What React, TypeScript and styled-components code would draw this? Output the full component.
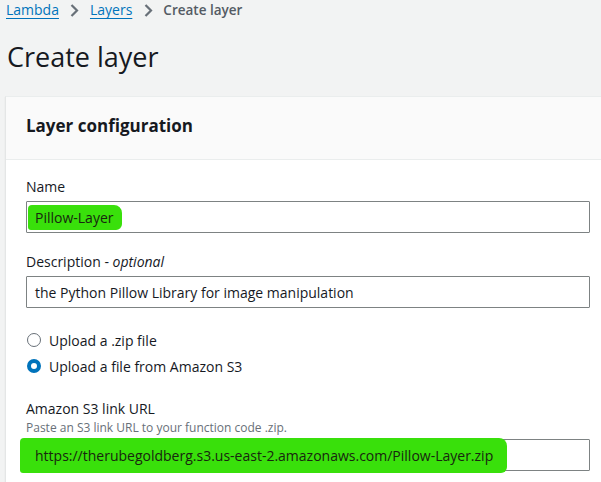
import React from "react";
import styled, { createGlobalStyle } from "styled-components";

const Global = createGlobalStyle`
  html, body { margin: 0; padding: 0; background: #f2f3f3; overflow: hidden; }
  body { font-family: "Open Sans", "Noto Sans", Arial, sans-serif; color: #16191f; }
`;

const Page = styled.div`
  width: 601px;
  height: 482px;
  overflow: hidden;
  padding-left: 6px;
  box-sizing: border-box;
`;

const Crumbs = styled.nav`
  display: flex;
  align-items: center;
  height: 20px;
  font-size: 14px;
  line-height: 20px;
`;

const CrumbLink = styled.a`
  color: #0073bb;
  text-decoration: underline;
  text-underline-offset: 3px;
  text-decoration-thickness: 1px;
`;

const CrumbCurrent = styled.span`
  color: #545b64;
  font-weight: 600;
  font-size: 13.5px;
`;

const Sep = styled.span`
  display: inline-flex;
  width: 31px;
  justify-content: center;
`;

const Title = styled.h1`
  margin: 19px 0 0 1px;
  font-size: 27px;
  line-height: 36px;
  font-weight: 400;
  color: #16191f;
`;

const Panel = styled.section`
  margin: 21px 0 0 -1px;
  width: 640px;
  background: #fff;
  border-top: 1px solid #eaeded;
  border-left: 1px solid #e4e6e6;
  box-shadow: 0 1px 1px rgba(0, 28, 36, 0.1);
`;

const PanelHeader = styled.header`
  background: #fafafa;
  height: 63px;
  border-bottom: 1px solid #eaeded;
  display: flex;
  align-items: center;
  padding: 0 0 4px 20px;
  box-sizing: border-box;
`;

const PanelTitle = styled.h2`
  margin: 0;
  font-size: 17px;
  font-weight: 700;
  color: #16191f;
  line-height: 24px;
`;

const PanelBody = styled.div`
  padding: 17px 0 20px 20px;
  width: 564px;
  display: flex;
  flex-direction: column;
`;

const Field = styled.div<{ $gap?: number }>`
  display: flex;
  flex-direction: column;
  margin-bottom: ${(p) => p.$gap ?? 0}px;
`;

const Label = styled.label`
  font-size: 14px;
  line-height: 20px;
  color: #16191f;
  margin-bottom: 4px;
`;

const Optional = styled.i`
  font-style: italic;
`;

const Hint = styled.div`
  font-size: 12px;
  line-height: 14px;
  color: #687078;
  margin: -2px 0 4px;
`;

const Input = styled.div`
  height: 32px;
  box-sizing: border-box;
  border: 1px solid #7d8283;
  border-radius: 1px;
  background: #fff;
  display: flex;
  align-items: center;
  padding-left: 8px;
  font-size: 14px;
  color: #16191f;
  white-space: nowrap;
`;

const Marker = styled.span<{ $left: number; $right: number; $pad: number }>`
  background: #39e00b;
  margin-left: ${(p) => -p.$left}px;
  padding: ${(p) => p.$pad}px ${(p) => p.$right}px ${(p) => p.$pad}px ${(p) => p.$left}px;
  border-radius: 4px 8px 6px 3px;
  color: #18260f;
`;

const Radios = styled.div`
  display: flex;
  flex-direction: column;
  gap: 6px;
  margin: 22px 0 23px;
`;

const RadioRow = styled.div`
  display: flex;
  align-items: center;
  height: 20px;
  font-size: 14px;
  color: #16191f;
`;

const Dot = styled.span<{ $on?: boolean }>`
  width: 14px;
  height: 14px;
  box-sizing: border-box;
  border-radius: 50%;
  margin: 0 8px 0 1px;
  border: ${(p) => (p.$on ? "4px solid #0073bb" : "1.5px solid #687078")};
  background: #fff;
`;

const Chevron = () => (
  <svg width="10" height="15" viewBox="0 0 10 15">
    <path d="M2.5 2l5.5 5.5-5.5 5.5" fill="none" stroke="#687078" strokeWidth="2.2" />
  </svg>
);

export default function App() {
  return (
    <Page>
      <Global />
      <Crumbs>
        <CrumbLink>Lambda</CrumbLink>
        <Sep>
          <Chevron />
        </Sep>
        <CrumbLink>Layers</CrumbLink>
        <Sep>
          <Chevron />
        </Sep>
        <CrumbCurrent>Create layer</CrumbCurrent>
      </Crumbs>
      <Title>Create layer</Title>
      <Panel>
        <PanelHeader>
          <PanelTitle>Layer configuration</PanelTitle>
        </PanelHeader>
        <PanelBody>
          <Field $gap={19}>
            <Label>Name</Label>
            <Input>
              <Marker $left={7} $right={9} $pad={3}>
                Pillow-Layer
              </Marker>
            </Input>
          </Field>
          <Field>
            <Label>
              Description - <Optional>optional</Optional>
            </Label>
            <Input>the Python Pillow Library for image manipulation</Input>
          </Field>
          <Radios>
            <RadioRow>
              <Dot />
              Upload a .zip file
            </RadioRow>
            <RadioRow>
              <Dot $on />
              Upload a file from Amazon S3
            </RadioRow>
          </Radios>
          <Field>
            <Label>Amazon S3 link URL</Label>
            <Hint>Paste an S3 link URL to your function code .zip.</Hint>
            <Input>
              <Marker $left={15} $right={14} $pad={8}>
                https://therubegoldberg.s3.us-east-2.amazonaws.com/Pillow-Layer.zip
              </Marker>
            </Input>
          </Field>
        </PanelBody>
      </Panel>
    </Page>
  );
}
